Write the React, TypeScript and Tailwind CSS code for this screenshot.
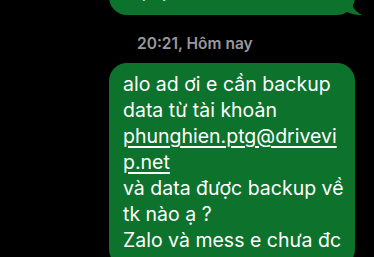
export default function App() {
  const lines = [
    "alo ad ơi e cần backup",
    "data từ tài khoản",
  ];
  return (
    <div className="w-[374px] h-[257px] overflow-hidden bg-black font-['Inter',sans-serif]">
      <div className="flex flex-col items-end pr-[19px]">
        {/* previous bubble, mostly scrolled off */}
        <div className="relative -mt-[33px] w-[246px] rounded-[18px] bg-[#0c722c] px-[14px] pt-[10px] pb-[12px] text-[19.5px] leading-[26px] text-white">
          rep ạ ?
          <svg className="absolute -right-[7px] bottom-0" width="20" height="18" viewBox="0 0 20 18">
            <path d="M0 0 H9 C9 8 12 14 20 18 C12 18 6 16 2 13 Z" fill="#0c722c" />
          </svg>
        </div>

        <div className="w-full pl-[137px] pt-[20px] text-[15.5px] font-semibold leading-[18px] text-[#98989e]">
          20:21, Hôm nay
        </div>

        <div className="mt-[10px] w-[246px] whitespace-nowrap rounded-[18px] bg-[#0c722c] px-[14px] pt-[8px] pb-[14px] text-[19.5px] leading-[26px] text-white">
          {lines.map((l) => (
            <div key={l}>{l}</div>
          ))}
          <div className="underline underline-offset-[3px] decoration-[1.5px]">phunghien.ptg@drivevi</div>
          <div className="underline underline-offset-[3px] decoration-[1.5px]">p.net</div>
          <div>và data được backup về</div>
          <div>tk nào ạ ?</div>
          <div>Zalo và mess e chưa đc</div>
        </div>
      </div>
    </div>
  );
}
